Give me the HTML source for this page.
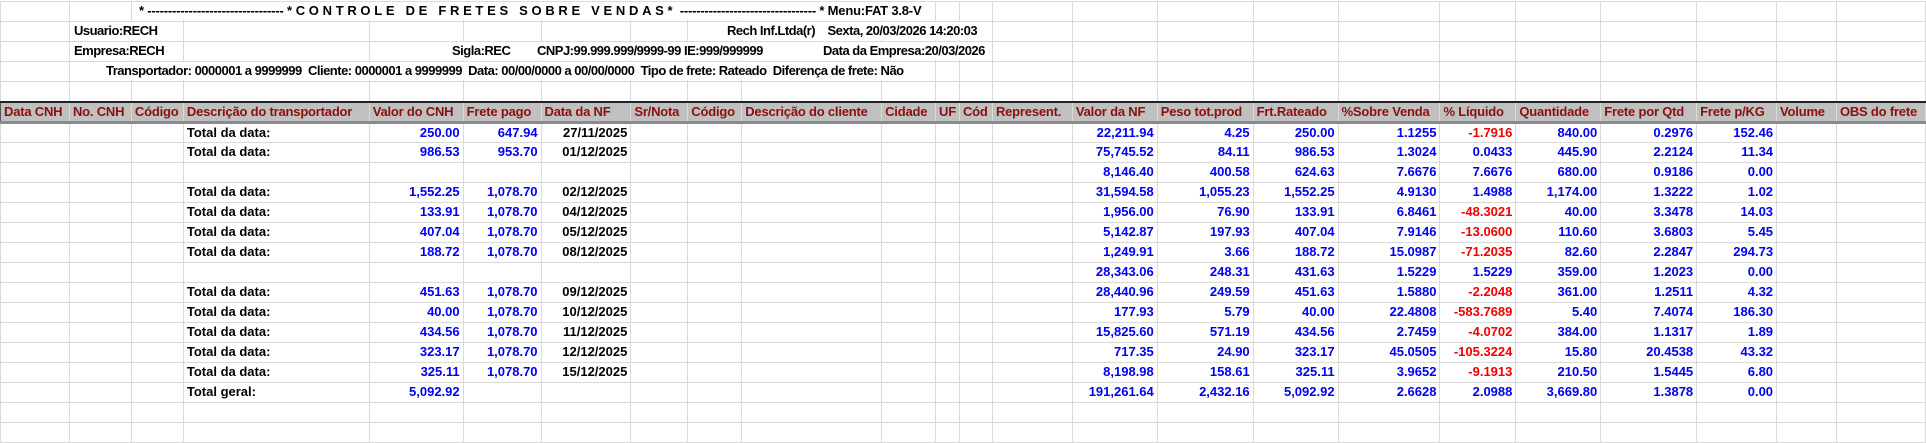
<!DOCTYPE html>
<html><head><meta charset="utf-8"><style>
*{margin:0;padding:0;box-sizing:border-box}
body{width:1926px;height:443px;overflow:hidden;background:#fff;font-family:"Liberation Sans",sans-serif;font-weight:bold;font-size:13px;position:relative}
table{border-collapse:collapse;table-layout:fixed;position:absolute;left:0;top:1px}
td{height:20px;border:1px solid #dadada;white-space:nowrap;overflow:hidden;padding:0 3px;line-height:18px}
tr.h td{background:#c0c0c0;color:#8b0f0f;border-top:2px solid #222;border-bottom:3px solid #8a8a8a;border-left:1px solid #555;letter-spacing:-0.2px}
td.r{text-align:right;color:#0000f0}
td.n{text-align:right;color:#f00000}
td.d{text-align:right;color:#000}
.t{position:absolute;background:#fff;white-space:nowrap;line-height:18px;color:#000;letter-spacing:-0.5px}
</style></head><body>
<table>
<colgroup>
<col style="width:69px"><col style="width:62px"><col style="width:52px"><col style="width:186px"><col style="width:94px"><col style="width:78px"><col style="width:90px"><col style="width:57px"><col style="width:54px"><col style="width:140px"><col style="width:54px"><col style="width:23px"><col style="width:33px"><col style="width:80px"><col style="width:85px"><col style="width:96px"><col style="width:85px"><col style="width:102px"><col style="width:76px"><col style="width:85px"><col style="width:96px"><col style="width:80px"><col style="width:60px"><col style="width:89px">
</colgroup>
<tr><td></td><td></td><td></td><td></td><td></td><td></td><td></td><td></td><td></td><td></td><td></td><td></td><td></td><td></td><td></td><td></td><td></td><td></td><td></td><td></td><td></td><td></td><td></td><td></td></tr>
<tr><td></td><td></td><td></td><td></td><td></td><td></td><td></td><td></td><td></td><td></td><td></td><td></td><td></td><td></td><td></td><td></td><td></td><td></td><td></td><td></td><td></td><td></td><td></td><td></td></tr>
<tr><td></td><td></td><td></td><td></td><td></td><td></td><td></td><td></td><td></td><td></td><td></td><td></td><td></td><td></td><td></td><td></td><td></td><td></td><td></td><td></td><td></td><td></td><td></td><td></td></tr>
<tr><td></td><td></td><td></td><td></td><td></td><td></td><td></td><td></td><td></td><td></td><td></td><td></td><td></td><td></td><td></td><td></td><td></td><td></td><td></td><td></td><td></td><td></td><td></td><td></td></tr>
<tr><td></td><td></td><td></td><td></td><td></td><td></td><td></td><td></td><td></td><td></td><td></td><td></td><td></td><td></td><td></td><td></td><td></td><td></td><td></td><td></td><td></td><td></td><td></td><td></td></tr>
<tr class="h"><td>Data CNH</td><td>No. CNH</td><td>Código</td><td>Descrição do transportador</td><td>Valor do CNH</td><td>Frete pago</td><td>Data da NF</td><td>Sr/Nota</td><td>Código</td><td>Descrição do cliente</td><td>Cidade</td><td>UF</td><td>Cód</td><td>Represent.</td><td>Valor da NF</td><td>Peso tot.prod</td><td>Frt.Rateado</td><td>%Sobre Venda</td><td>% Líquido</td><td>Quantidade</td><td>Frete por Qtd</td><td>Frete p/KG</td><td>Volume</td><td>OBS do frete</td></tr>
<tr><td></td><td></td><td></td><td>Total da data:</td><td class="r">250.00</td><td class="r">647.94</td><td class="d">27/11/2025</td><td></td><td></td><td></td><td></td><td></td><td></td><td></td><td class="r">22,211.94</td><td class="r">4.25</td><td class="r">250.00</td><td class="r">1.1255</td><td class="n">-1.7916</td><td class="r">840.00</td><td class="r">0.2976</td><td class="r">152.46</td><td></td><td></td></tr>
<tr><td></td><td></td><td></td><td>Total da data:</td><td class="r">986.53</td><td class="r">953.70</td><td class="d">01/12/2025</td><td></td><td></td><td></td><td></td><td></td><td></td><td></td><td class="r">75,745.52</td><td class="r">84.11</td><td class="r">986.53</td><td class="r">1.3024</td><td class="r">0.0433</td><td class="r">445.90</td><td class="r">2.2124</td><td class="r">11.34</td><td></td><td></td></tr>
<tr><td></td><td></td><td></td><td></td><td></td><td></td><td></td><td></td><td></td><td></td><td></td><td></td><td></td><td></td><td class="r">8,146.40</td><td class="r">400.58</td><td class="r">624.63</td><td class="r">7.6676</td><td class="r">7.6676</td><td class="r">680.00</td><td class="r">0.9186</td><td class="r">0.00</td><td></td><td></td></tr>
<tr><td></td><td></td><td></td><td>Total da data:</td><td class="r">1,552.25</td><td class="r">1,078.70</td><td class="d">02/12/2025</td><td></td><td></td><td></td><td></td><td></td><td></td><td></td><td class="r">31,594.58</td><td class="r">1,055.23</td><td class="r">1,552.25</td><td class="r">4.9130</td><td class="r">1.4988</td><td class="r">1,174.00</td><td class="r">1.3222</td><td class="r">1.02</td><td></td><td></td></tr>
<tr><td></td><td></td><td></td><td>Total da data:</td><td class="r">133.91</td><td class="r">1,078.70</td><td class="d">04/12/2025</td><td></td><td></td><td></td><td></td><td></td><td></td><td></td><td class="r">1,956.00</td><td class="r">76.90</td><td class="r">133.91</td><td class="r">6.8461</td><td class="n">-48.3021</td><td class="r">40.00</td><td class="r">3.3478</td><td class="r">14.03</td><td></td><td></td></tr>
<tr><td></td><td></td><td></td><td>Total da data:</td><td class="r">407.04</td><td class="r">1,078.70</td><td class="d">05/12/2025</td><td></td><td></td><td></td><td></td><td></td><td></td><td></td><td class="r">5,142.87</td><td class="r">197.93</td><td class="r">407.04</td><td class="r">7.9146</td><td class="n">-13.0600</td><td class="r">110.60</td><td class="r">3.6803</td><td class="r">5.45</td><td></td><td></td></tr>
<tr><td></td><td></td><td></td><td>Total da data:</td><td class="r">188.72</td><td class="r">1,078.70</td><td class="d">08/12/2025</td><td></td><td></td><td></td><td></td><td></td><td></td><td></td><td class="r">1,249.91</td><td class="r">3.66</td><td class="r">188.72</td><td class="r">15.0987</td><td class="n">-71.2035</td><td class="r">82.60</td><td class="r">2.2847</td><td class="r">294.73</td><td></td><td></td></tr>
<tr><td></td><td></td><td></td><td></td><td></td><td></td><td></td><td></td><td></td><td></td><td></td><td></td><td></td><td></td><td class="r">28,343.06</td><td class="r">248.31</td><td class="r">431.63</td><td class="r">1.5229</td><td class="r">1.5229</td><td class="r">359.00</td><td class="r">1.2023</td><td class="r">0.00</td><td></td><td></td></tr>
<tr><td></td><td></td><td></td><td>Total da data:</td><td class="r">451.63</td><td class="r">1,078.70</td><td class="d">09/12/2025</td><td></td><td></td><td></td><td></td><td></td><td></td><td></td><td class="r">28,440.96</td><td class="r">249.59</td><td class="r">451.63</td><td class="r">1.5880</td><td class="n">-2.2048</td><td class="r">361.00</td><td class="r">1.2511</td><td class="r">4.32</td><td></td><td></td></tr>
<tr><td></td><td></td><td></td><td>Total da data:</td><td class="r">40.00</td><td class="r">1,078.70</td><td class="d">10/12/2025</td><td></td><td></td><td></td><td></td><td></td><td></td><td></td><td class="r">177.93</td><td class="r">5.79</td><td class="r">40.00</td><td class="r">22.4808</td><td class="n">-583.7689</td><td class="r">5.40</td><td class="r">7.4074</td><td class="r">186.30</td><td></td><td></td></tr>
<tr><td></td><td></td><td></td><td>Total da data:</td><td class="r">434.56</td><td class="r">1,078.70</td><td class="d">11/12/2025</td><td></td><td></td><td></td><td></td><td></td><td></td><td></td><td class="r">15,825.60</td><td class="r">571.19</td><td class="r">434.56</td><td class="r">2.7459</td><td class="n">-4.0702</td><td class="r">384.00</td><td class="r">1.1317</td><td class="r">1.89</td><td></td><td></td></tr>
<tr><td></td><td></td><td></td><td>Total da data:</td><td class="r">323.17</td><td class="r">1,078.70</td><td class="d">12/12/2025</td><td></td><td></td><td></td><td></td><td></td><td></td><td></td><td class="r">717.35</td><td class="r">24.90</td><td class="r">323.17</td><td class="r">45.0505</td><td class="n">-105.3224</td><td class="r">15.80</td><td class="r">20.4538</td><td class="r">43.32</td><td></td><td></td></tr>
<tr><td></td><td></td><td></td><td>Total da data:</td><td class="r">325.11</td><td class="r">1,078.70</td><td class="d">15/12/2025</td><td></td><td></td><td></td><td></td><td></td><td></td><td></td><td class="r">8,198.98</td><td class="r">158.61</td><td class="r">325.11</td><td class="r">3.9652</td><td class="n">-9.1913</td><td class="r">210.50</td><td class="r">1.5445</td><td class="r">6.80</td><td></td><td></td></tr>
<tr><td></td><td></td><td></td><td>Total geral:</td><td class="r">5,092.92</td><td></td><td></td><td></td><td></td><td></td><td></td><td></td><td></td><td></td><td class="r">191,261.64</td><td class="r">2,432.16</td><td class="r">5,092.92</td><td class="r">2.6628</td><td class="r">2.0988</td><td class="r">3,669.80</td><td class="r">1.3878</td><td class="r">0.00</td><td></td><td></td></tr>
<tr><td></td><td></td><td></td><td></td><td></td><td></td><td></td><td></td><td></td><td></td><td></td><td></td><td></td><td></td><td></td><td></td><td></td><td></td><td></td><td></td><td></td><td></td><td></td><td></td></tr>
<tr><td></td><td></td><td></td><td></td><td></td><td></td><td></td><td></td><td></td><td></td><td></td><td></td><td></td><td></td><td></td><td></td><td></td><td></td><td></td><td></td><td></td><td></td><td></td><td></td></tr>
</table>
<div class="t" style="left:139px;top:2px;letter-spacing:-0.2px">* --------------------------------- <span style="letter-spacing:3.7px">*CONTROLE DE FRETES SOBRE VENDAS*</span> --------------------------------- * Menu:FAT 3.8-V</div>
<div class="t" style="left:74px;top:22px">Usuario:RECH</div>
<div class="t" style="left:727px;top:22px">Rech Inf.Ltda(r)&nbsp;&nbsp;&nbsp; Sexta, 20/03/2026 14:20:03</div>
<div class="t" style="left:74px;top:42px">Empresa:RECH</div>
<div class="t" style="left:452px;top:42px">Sigla:REC</div>
<div class="t" style="left:537px;top:42px">CNPJ:99.999.999/9999-99 IE:999/999999</div>
<div class="t" style="left:823px;top:42px">Data da Empresa:20/03/2026</div>
<div class="t" style="left:106px;top:62px">Transportador: 0000001 a 9999999&nbsp; Cliente: 0000001 a 9999999&nbsp; Data: 00/00/0000 a 00/00/0000&nbsp; Tipo de frete: Rateado&nbsp; Diferença de frete: Não</div>
</body></html>
